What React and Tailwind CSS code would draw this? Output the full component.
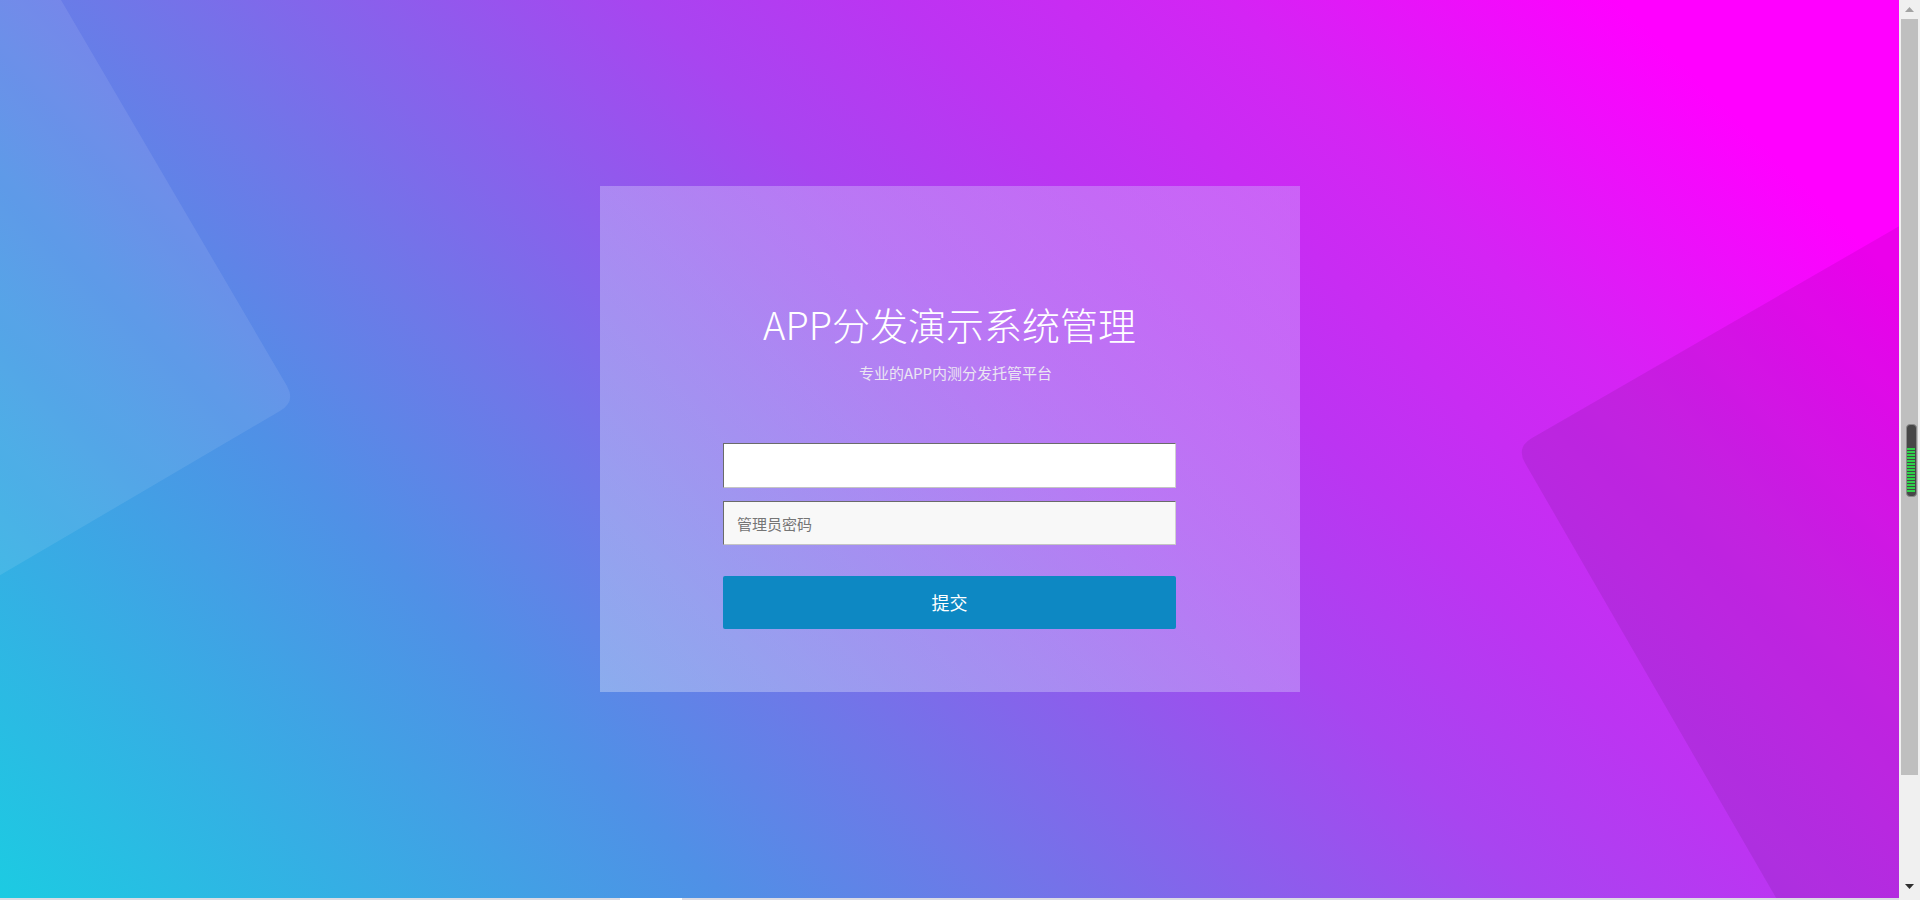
export default function App() {
  const stripes = Array.from({ length: 15 });
  return (
    <div className="flex h-[900px] w-full overflow-hidden bg-[#f0f0f0] font-['Noto_Sans_CJK_SC','Liberation_Sans',sans-serif]">
      <div className="flex min-w-0 flex-1 flex-col">
        <main className="relative flex flex-1 flex-col items-center overflow-hidden bg-[linear-gradient(45deg,#1ccbe2_0%,#5090e6_26%,#6e78e8_36%,#a845f0_55%,#bc34f2_64%,#d424f4_76%,#ff00ff_90%,#ff00ff_100%)]">
          <svg className="pointer-events-none absolute inset-0" width="100%" height="100%">
            <path
              d="M -141 -345 L 287 386 Q 296 402 280 411 L -100 634 L -200 -345 Z"
              fill="rgba(255,255,255,0.09)"
            />
            <path
              d="M 2000 168 L 1532 438 Q 1516 447 1525 463 L 1835 1000 L 2000 1000 Z"
              fill="rgba(0,0,0,0.08)"
            />
          </svg>
          <div className="relative mt-[186px] flex h-[506px] w-[700px] flex-col items-center bg-[linear-gradient(45deg,rgba(255,255,255,0.3),rgba(205,215,255,0.32))] pt-[119px]">
            <h1 className="text-[38px] font-light leading-[38px] text-white">APP分发演示系统管理</h1>
            <p className="mt-[22px] pl-[12px] text-[15px] leading-[15px] text-[#ebe6f2]">专业的APP内测分发托管平台</p>
            <form className="mt-[63px] flex w-[453px] flex-col" onSubmit={(e) => e.preventDefault()}>
              <input
                type="text"
                className="h-[45px] w-full border border-t-[#6b6b6b] border-l-[#6b6b6b] border-r-[#d0d0d0] border-b-[#c4c4c4] bg-white px-[13px] text-[15px] outline-none"
              />
              <input
                type="password"
                placeholder="管理员密码"
                className="mt-[13px] h-[44px] w-full border border-t-[#6b6b6b] border-l-[#6b6b6b] border-r-[#d0d0d0] border-b-[#c4c4c4] bg-[#f8f8f8] px-[13px] text-[15px] text-[#333] outline-none placeholder:text-[#757575]"
              />
              <button
                type="submit"
                className="mt-[31px] h-[53px] w-full rounded-[2px] bg-[#0d88c3] text-[18px] text-white"
              >
                提交
              </button>
            </form>
          </div>
        </main>
        <div className="flex h-[2px] bg-[#dcdce4]">
          <div className="ml-[620px] h-full w-[62px] bg-white" />
        </div>
      </div>
      <div className="flex w-[21px] flex-col items-center bg-[#f0f0f0]">
        <div className="flex h-[19px] items-center justify-center">
          <svg width="9" height="5" viewBox="0 0 9 5">
            <path d="M0 5 L4.5 0 L9 5 Z" fill="#a3a3a3" />
          </svg>
        </div>
        <div className="flex h-[756px] w-[17px] flex-col items-center bg-[#bfbfbf] pt-[405px]">
          <div className="ml-[3px] flex h-[73px] w-[11px] flex-col items-center gap-[1px] rounded-[4px] border border-[#8a8a8a] bg-[#474747] pt-[23px]">
            {stripes.map((_, i) => (
              <div key={i} className="h-[2px] w-[8px] bg-[#2fd14a]" />
            ))}
          </div>
        </div>
        <div className="flex-1" />
        <div className="mb-[9px] flex h-[10px] items-center justify-center">
          <svg width="9" height="5" viewBox="0 0 9 5">
            <path d="M0 0 L9 0 L4.5 5 Z" fill="#2f2f2f" />
          </svg>
        </div>
      </div>
    </div>
  );
}
